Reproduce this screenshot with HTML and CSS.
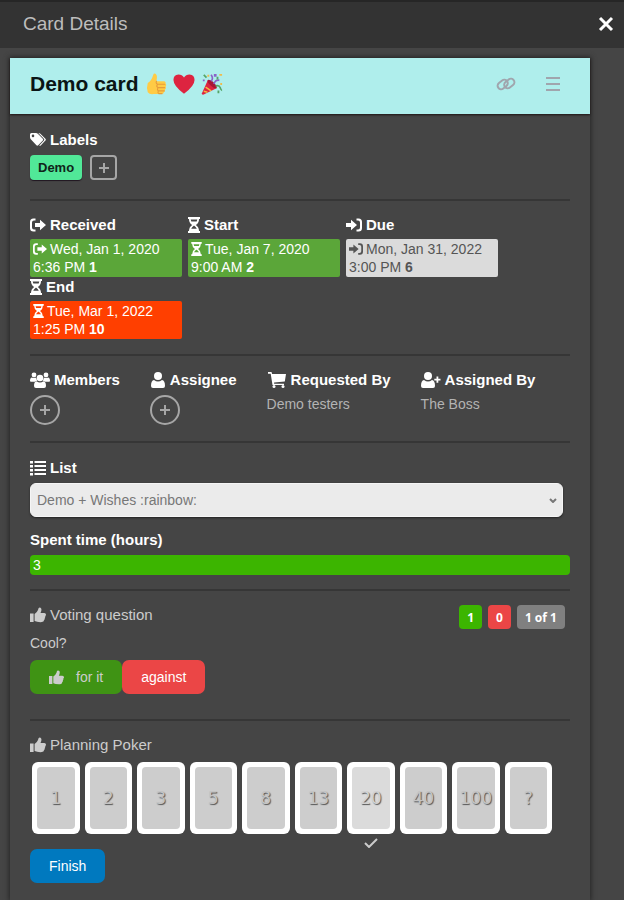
FILE: index.html
```
<!DOCTYPE html>
<html lang="en">
<head>
    <meta charset="UTF-8">
    <meta name="viewport" content="width=device-width, initial-scale=1.0">
    <title>Card Details</title>
    <link rel="stylesheet" href="styles.css">
</head>
<body>
    <!-- shared icons -->
    <svg class="sprite" aria-hidden="true">
        <symbol id="i-tags" viewBox="0 0 16 16">
            <path fill-rule="evenodd" d="M0 2.5Q0 1 1.5 1H6q1 0 1.800.8l5 5q.9.9 0 1.800L8.200 13.200q-.9.900-1.800 0l-5.600-6Q0 6.300 0 5zM3 2.600a1.300 1.300 0 1 0 0 2.600 1.300 1.300 0 0 0 0-2.600z"/>
            <path d="M8.300 1q1.300 0 2.100.8l5 5q.9.900 0 1.800l-4.700 4.800q-.7.600-1.500 0l4.700-4.900q.8-.9 0-1.800z"/>
        </symbol>
        <symbol id="i-out" viewBox="0 0 16 16">
            <path d="M5.500 1.500v2H4q-2 0-2 2v5q0 2 2 2h1.500v2H3.500Q0 14.500 0 11V5Q0 1.500 3.500 1.500z"/>
            <path d="M5 6h5V2.800L16 8l-6 5.200V10H5z"/>
        </symbol>
        <symbol id="i-in" viewBox="0 0 16 16">
            <path d="M10.500 1.500v2H12q2 0 2 2v5q0 2-2 2h-1.500v2h2Q16 14.500 16 11V5q0-3.500-3.500-3.500z"/>
            <path d="M0 6h5V2.800L11 8l-6 5.200V10H0z"/>
        </symbol>
        <symbol id="i-hourglass" viewBox="0 0 12 16">
            <path fill-rule="evenodd" d="M0 0h12v2h-1q0 4-3.200 6Q11 10 11 14h1v2H0v-2h1q0-4 3.200-6Q1 6 1 2H0zM2.700 2.500L3.300 4.500h5.400L9.300 2.500zM5.700 8.800q-1.800 1.400-2.500 3h5.600q-.7-1.600-2.500-3z"/>
        </symbol>
        <symbol id="i-users" viewBox="0 0 20 16">
            <circle cx="4" cy="3" r="2.400"/>
            <circle cx="16" cy="3" r="2.400"/>
            <path d="M0 9q0-3.500 2-3.500 2 1 4 0 .5 2 1.200 3L5 9.800H1Q0 9.800 0 9zM20 9q0-3.500-2-3.500-2 1-4 0-.5 2-1.200 3L15 9.800h4q1 0 1-.8z"/>
            <circle cx="10" cy="6" r="3.300"/>
            <path d="M4 14q0-4.500 2.600-4.800 3.400 2.600 6.800 0Q16 9.500 16 14q0 2-2 2H6q-2 0-2-2z"/>
        </symbol>
        <symbol id="i-user" viewBox="0 0 14 16">
            <circle cx="7" cy="4" r="4"/>
            <path d="M0 14q0-5.500 3-6 4 3 8 0 3 .5 3 6 0 2-2 2H2q-2 0-2-2z"/>
        </symbol>
        <symbol id="i-cart" viewBox="0 0 18 16">
            <path d="M0 0h3.500l.6 2H18l-1.200 7.500-10.700 1v1.200H16V13H4.500L2.700 1.800H0z"/>
            <circle cx="6" cy="14.500" r="1.500"/>
            <circle cx="15" cy="14.500" r="1.500"/>
        </symbol>
        <symbol id="i-user-plus" viewBox="0 0 20 16">
            <circle cx="7" cy="4" r="4"/>
            <path d="M0 14q0-5.500 3-6 4 3 8 0 3 .5 3 6 0 2-2 2H2q-2 0-2-2z"/>
            <path d="M15.500 4.500h1.800v2.200h2.200v1.800h-2.200v2.200h-1.800V8.500h-2.200V6.700h2.200z"/>
        </symbol>
        <symbol id="i-list" viewBox="0 0 16 16">
            <path d="M0 1h3v2.500H0zM0 5h3v2.500H0zM0 9h3v2.500H0zM0 13h3v2.500H0zM4.500 1H16v2H4.500zM4.500 5H16v2H4.500zM4.500 9H16v2H4.500zM4.500 13H16v2H4.500z"/>
        </symbol>
        <symbol id="i-thumb" viewBox="0 0 16 16">
            <path d="M0 6.500h3.600V15H0zM4.600 7Q7 5.500 8 3q.3-2.500 1.500-2.500Q12 .5 11.300 4l-.8 2h3.700q1.800 0 1.800 1.600 0 1-.7 1.500.3 1.200-.5 2 .2 1.300-.7 2-.2 2-2.300 2Q7 15.300 4.600 14z"/>
        </symbol>
        <symbol id="i-plus" viewBox="0 0 12 12">
            <path d="M5 1h2v4h4v2H7v4H5V7H1V5h4z"/>
        </symbol>
    </svg>

    <header class="topbar">
        <h1 class="topbar-title">Card Details</h1>
        <button class="icon-button close" type="button" aria-label="Close">
            <svg viewBox="0 0 16 16"><path d="M2 2l12 12M14 2L2 14"/></svg>
        </button>
    </header>

    <main class="card">
        <div class="card-header">
            <h2 class="card-title">Demo card
                <svg class="emoji" viewBox="0 0 24 24" role="img" aria-label="Thumbs up">
                    <path fill="#ffcb45" d="M3 11q4-2 6-9 .6-2 2.400-1.300Q14 2 12.500 9H21q2 .3 1.500 2.500Q24 13 22.500 15q1 2-.8 3.200.5 2-1.200 2.800 0 2-2 2H9q-4 .5-6-2-1.500-5 0-10z"/>
                    <path fill="none" stroke="#e79d3a" stroke-width="1.200" stroke-linecap="round" d="M12.500 9q-1 2 1 3.300h8M13.500 12.500q-1.500 2 .5 3.500h7.500M14 16q-1 2 .5 3.500h6.500M14.500 19.500q-1 2 .5 3h3.500"/>
                </svg>
                <svg class="emoji" viewBox="0 0 24 24" role="img" aria-label="Heart">
                    <path fill="#dd2440" d="M12 22.500Q.5 14 .5 7.500.5 2 6 1.500 10 1.500 12 5q2-3.500 6-3.500 5.500.5 5.500 6 0 6.500-11.500 15z"/>
                </svg>
                <svg class="emoji" viewBox="0 0 24 24" role="img" aria-label="Party popper">
                    <path fill="#dd2440" d="M1 22L7.500 7.500Q14 9 17 16.500L3 23.500Q.5 24 1 22z"/>
                    <path fill="#a81635" d="M7.500 7.500q-1.500 2 3 6t6.500 3q1-1.500-2.500-5.500t-7-3.500z"/>
                    <path fill="none" stroke="#f5b841" stroke-width="1.600" d="M3 20l4 1M5 15.500l6 4"/>
                    <path fill="none" stroke="#8a63c7" stroke-width="1.800" d="M11 9q3-3 0-7M14 12q2-5 6-4"/>
                    <path fill="none" stroke="#55a566" stroke-width="1.800" d="M3 2l3 3M16 14q4-1 5 2t2 3"/>
                    <path fill="#8a63c7" d="M14 1h3v3h-3zM2 7h2v2H2z"/>
                    <path fill="#efbd4b" d="M20 1h3v2h-3zM7 2h2v2H7zM21 11h2v2h-2z"/>
                    <path fill="#55a566" d="M17 4h2v3h-2zM18 19h2v3h-2z"/>
                </svg>
            </h2>
            <a class="header-link" href="#" aria-label="Copy link">
                <svg viewBox="0 0 20 16">
                    <rect x="1.200" y="5" width="11" height="7" rx="3.500" transform="rotate(-38 6.700 8.500)"/>
                    <rect x="7.800" y="4" width="11" height="7" rx="3.500" transform="rotate(-38 13.300 7.500)"/>
                </svg>
            </a>
            <button class="icon-button menu" type="button" aria-label="Card menu">
                <svg viewBox="0 0 16 16"><path d="M1 2h14M1 8h14M1 14h14"/></svg>
            </button>
        </div>

        <section class="section labels">
            <h3 class="item-title"><svg class="icon"><use href="#i-tags"/></svg>Labels</h3>
            <div class="label-list">
                <span class="label">Demo</span>
                <button class="add-label" type="button" aria-label="Add label"><svg><use href="#i-plus"/></svg></button>
            </div>
        </section>

        <section class="section dates">
            <div class="date-item">
                <h3 class="item-title"><svg class="icon"><use href="#i-out"/></svg>Received</h3>
                <a class="date date-green" href="#"><svg class="icon"><use href="#i-out"/></svg>Wed, Jan 1, 2020 6:36 PM <b>1</b></a>
            </div>
            <div class="date-item">
                <h3 class="item-title"><svg class="icon narrow"><use href="#i-hourglass"/></svg>Start</h3>
                <a class="date date-green" href="#"><svg class="icon narrow"><use href="#i-hourglass"/></svg>Tue, Jan 7, 2020 9:00 AM <b>2</b></a>
            </div>
            <div class="date-item">
                <h3 class="item-title"><svg class="icon"><use href="#i-in"/></svg>Due</h3>
                <a class="date date-grey" href="#"><svg class="icon"><use href="#i-in"/></svg>Mon, Jan 31, 2022 3:00 PM <b>6</b></a>
            </div>
            <div class="date-item">
                <h3 class="item-title"><svg class="icon narrow"><use href="#i-hourglass"/></svg>End</h3>
                <a class="date date-red" href="#"><svg class="icon narrow"><use href="#i-hourglass"/></svg>Tue, Mar 1, 2022 1:25 PM <b>10</b></a>
            </div>
        </section>

        <section class="section people">
            <div>
                <h3 class="item-title"><svg class="icon wide"><use href="#i-users"/></svg>Members</h3>
                <button class="add-member" type="button" aria-label="Add member"><svg><use href="#i-plus"/></svg></button>
            </div>
            <div>
                <h3 class="item-title"><svg class="icon"><use href="#i-user"/></svg>Assignee</h3>
                <button class="add-member" type="button" aria-label="Add assignee"><svg><use href="#i-plus"/></svg></button>
            </div>
            <div>
                <h3 class="item-title"><svg class="icon wide"><use href="#i-cart"/></svg>Requested By</h3>
                <p class="person">Demo testers</p>
            </div>
            <div>
                <h3 class="item-title"><svg class="icon wide"><use href="#i-user-plus"/></svg>Assigned By</h3>
                <p class="person">The Boss</p>
            </div>
        </section>

        <section class="section fields">
            <label class="item-title" for="list"><svg class="icon"><use href="#i-list"/></svg>List</label>
            <div class="select-wrap">
                <select id="list">
                    <option>Demo + Wishes :rainbow:</option>
                </select>
                <svg class="chevron" viewBox="0 0 8 5"><path d="M1 1l3 3 3-3"/></svg>
            </div>
            <h3 class="item-title">Spent time (hours)</h3>
            <div class="spent-time">3</div>
        </section>

        <section class="section voting">
            <div class="vote-header">
                <h3 class="vote-title"><svg class="icon"><use href="#i-thumb"/></svg>Voting question</h3>
                <div class="vote-results">
                    <span class="badge badge-green">1</span>
                    <span class="badge badge-red">0</span>
                    <span class="badge">1 of 1</span>
                </div>
            </div>
            <p class="question">Cool?</p>
            <div class="vote-buttons">
                <button class="button button-for" type="button"><svg class="icon"><use href="#i-thumb"/></svg>for it</button>
                <button class="button button-against" type="button">against</button>
            </div>
        </section>

        <section class="section poker">
            <h3 class="vote-title"><svg class="icon"><use href="#i-thumb"/></svg>Planning Poker</h3>
            <div class="poker-deck">
                <button class="poker-card" type="button"><span>1</span></button>
                <button class="poker-card" type="button"><span>2</span></button>
                <button class="poker-card" type="button"><span>3</span></button>
                <button class="poker-card" type="button"><span>5</span></button>
                <button class="poker-card" type="button"><span>8</span></button>
                <button class="poker-card" type="button"><span>13</span></button>
                <button class="poker-card selected" type="button">
                    <span>20</span>
                    <svg class="check" viewBox="0 0 14 10"><path d="M1 5l4 4 8-8"/></svg>
                </button>
                <button class="poker-card" type="button"><span>40</span></button>
                <button class="poker-card" type="button"><span>100</span></button>
                <button class="poker-card" type="button"><span>?</span></button>
            </div>
            <button class="button button-primary" type="button">Finish</button>
        </section>
    </main>
</body>
</html>
```
FILE: styles.css
```
* {
    box-sizing: border-box;
}

html,
body {
    margin: 0;
    padding: 0;
}

body {
    display: flex;
    flex-direction: column;
    min-height: 100vh;
    background: #454545;
    color: #ccc;
    font-family: "Liberation Sans", Arial, sans-serif;
    font-size: 14px;
    line-height: 18px;
}

h1,
h2,
h3,
p {
    margin: 0;
}

button,
select {
    font-family: inherit;
    font-size: inherit;
    cursor: pointer;
}

.sprite {
    display: none;
}

.icon {
    width: 16px;
    height: 16px;
    flex: none;
    fill: currentColor;
}

.icon.narrow {
    width: 12px;
}

.icon.wide {
    width: 20px;
}

.icon-button {
    padding: 0;
    border: none;
    background: none;
}

.icon-button svg {
    display: block;
    width: 16px;
    height: 16px;
    fill: none;
    stroke: currentColor;
}

/* top bar */
.topbar {
    display: flex;
    align-items: center;
    justify-content: space-between;
    height: 48px;
    padding: 0 10px 2px 23px;
    border-top: 2px solid #262626;
    background: #333;
}

.topbar-title {
    color: #bdbdbd;
    font-size: 19px;
    font-weight: 400;
    line-height: 24px;
}

.close {
    color: #fff;
    stroke-width: 3;
}

/* card panel */
.card {
    flex: 1;
    margin: 10px 34px 0 10px;
    background: #454545;
    box-shadow: 0 0 5px 1px #262626;
}

.card-header {
    display: flex;
    align-items: center;
    height: 56px;
    padding: 0 29px 4px 20px;
    background: #afeeec;
    color: #a0a5ad;
    box-shadow: 0 1px 2px #1d1414;
}

.card-title {
    display: flex;
    align-items: center;
    gap: 6px;
    flex: 1;
    color: #0a1516;
    font-size: 21px;
    line-height: 26px;
}

.emoji {
    width: 22px;
    height: 22px;
}

.header-link {
    margin-right: 29px;
    color: inherit;
}

.header-link svg {
    display: block;
    width: 20px;
    height: 16px;
    fill: none;
    stroke: currentColor;
    stroke-width: 2;
}

.menu {
    color: inherit;
    stroke-width: 2;
}

.section {
    margin: 0 20px;
    border-bottom: 2px solid #363636;
}

.item-title {
    display: flex;
    align-items: center;
    gap: 4px;
    color: #fff;
    font-size: 15px;
    font-weight: 700;
    line-height: 20px;
}

/* labels */
.labels {
    padding: 16px 0 19px;
}

.label-list {
    display: flex;
    gap: 8px;
    margin-top: 5px;
}

.label {
    height: 25px;
    padding: 0 8px;
    border-radius: 4px;
    background: #51e898;
    color: #10251a;
    font-size: 13px;
    font-weight: 700;
    line-height: 25px;
    box-shadow: 0 1px 1px #201520;
}

.add-label {
    display: grid;
    place-items: center;
    width: 27px;
    height: 25px;
    padding: 0;
    border: 2px solid #a6a6a6;
    border-radius: 4px;
    background: none;
}

.add-label svg,
.add-member svg {
    width: 12px;
    height: 12px;
    fill: #a6a6a6;
}

/* dates */
.dates {
    display: flex;
    flex-wrap: wrap;
    column-gap: 6px;
    padding: 14px 0 15px;
}

.date-item {
    width: 152px;
}

.date {
    display: block;
    margin-top: 4px;
    padding: 1px 3px;
    border-radius: 2px;
    color: #fff;
    text-decoration: none;
}

.date .icon {
    width: 14px;
    height: 14px;
    margin-right: 3px;
    vertical-align: -2px;
}

.date .icon.narrow {
    width: 11px;
}

.date-green {
    background: #5ba639;
}

.date-grey {
    background: #dbdbdb;
    color: #555;
}

.date-red {
    background: #ff3f00;
}

/* people */
.people {
    display: flex;
    gap: 30px;
    padding: 14px 0 16px;
}

.add-member {
    display: grid;
    place-items: center;
    width: 30px;
    height: 30px;
    margin-top: 5px;
    padding: 0;
    border: 2px solid #a6a6a6;
    border-radius: 50%;
    background: none;
}

.person {
    margin-top: 5px;
    color: #b3b3b3;
}

/* list and time */
.fields {
    padding: 15px 0 14px;
}

.select-wrap {
    position: relative;
    margin: 5px 7px 13px 0;
}

.select-wrap select {
    display: block;
    width: 100%;
    height: 34px;
    padding: 0 24px 0 6px;
    border: 1px solid #f5f5f5;
    border-radius: 6px;
    background: #ebebeb;
    color: #777;
    appearance: none;
    box-shadow: 0 1px 2px #222;
}

.chevron {
    position: absolute;
    top: 15px;
    right: 6px;
    width: 8px;
    height: 5px;
    fill: none;
    stroke: #777;
    stroke-width: 2;
    pointer-events: none;
}

.spent-time {
    height: 20px;
    margin-top: 5px;
    padding: 0 3px;
    border-radius: 4px;
    background: #3cb500;
    color: #fff;
    line-height: 20px;
}

/* voting */
.voting {
    padding: 14px 0 25px;
}

.vote-header {
    display: flex;
    justify-content: space-between;
    align-items: flex-start;
}

.vote-title {
    display: flex;
    align-items: center;
    gap: 4px;
    font-size: 15px;
    font-weight: 400;
    line-height: 20px;
}

.vote-results {
    display: flex;
    gap: 6px;
    margin-right: 5px;
}

.badge {
    height: 24px;
    padding: 0 8px;
    border-radius: 4px;
    background: #808080;
    color: #fff;
    font-family: "Noto Sans", sans-serif;
    font-size: 12px;
    font-weight: 700;
    line-height: 25px;
}

.badge-green {
    background: #3cb500;
}

.badge-red {
    background: #eb4646;
}

.question {
    margin: 5px 0 8px;
}

.vote-buttons {
    display: flex;
}

.button {
    display: flex;
    align-items: center;
    height: 34px;
    padding: 0 19px;
    border: none;
    border-radius: 7px;
    color: #fff;
}

.button-for {
    gap: 12px;
    background: #3f9314;
    color: #ccc;
}

.button-for .icon {
    width: 15px;
    height: 15px;
}

.button-against {
    background: #eb4646;
}

.button-primary {
    background: #0079bf;
}

/* planning poker */
.poker {
    padding: 14px 0 17px;
    border-bottom: none;
}

.poker-deck {
    display: grid;
    grid-template-columns: repeat(10, 1fr);
    gap: 5px;
    margin: 7px 18px 15px 2px;
}

.poker-card {
    position: relative;
    display: flex;
    min-width: 0;
    height: 72px;
    padding: 5px;
    border: none;
    border-radius: 6px;
    background: #fff;
}

.poker-card span {
    display: flex;
    align-items: center;
    justify-content: center;
    flex: 1;
    min-width: 0;
    height: 100%;
    border-radius: 4px;
    background: #cdcdcd;
    color: #c4c4c4;
    font-family: "DejaVu Sans", sans-serif;
    font-size: 17px;
    text-shadow: 1px 1px 1px #555;
}

.poker-card.selected span {
    background: #dbdbdb;
    color: #d2d2d2;
}

.check {
    position: absolute;
    top: 76px;
    left: 17px;
    width: 14px;
    height: 10px;
    fill: none;
    stroke: #ccc;
    stroke-width: 2;
}
```
